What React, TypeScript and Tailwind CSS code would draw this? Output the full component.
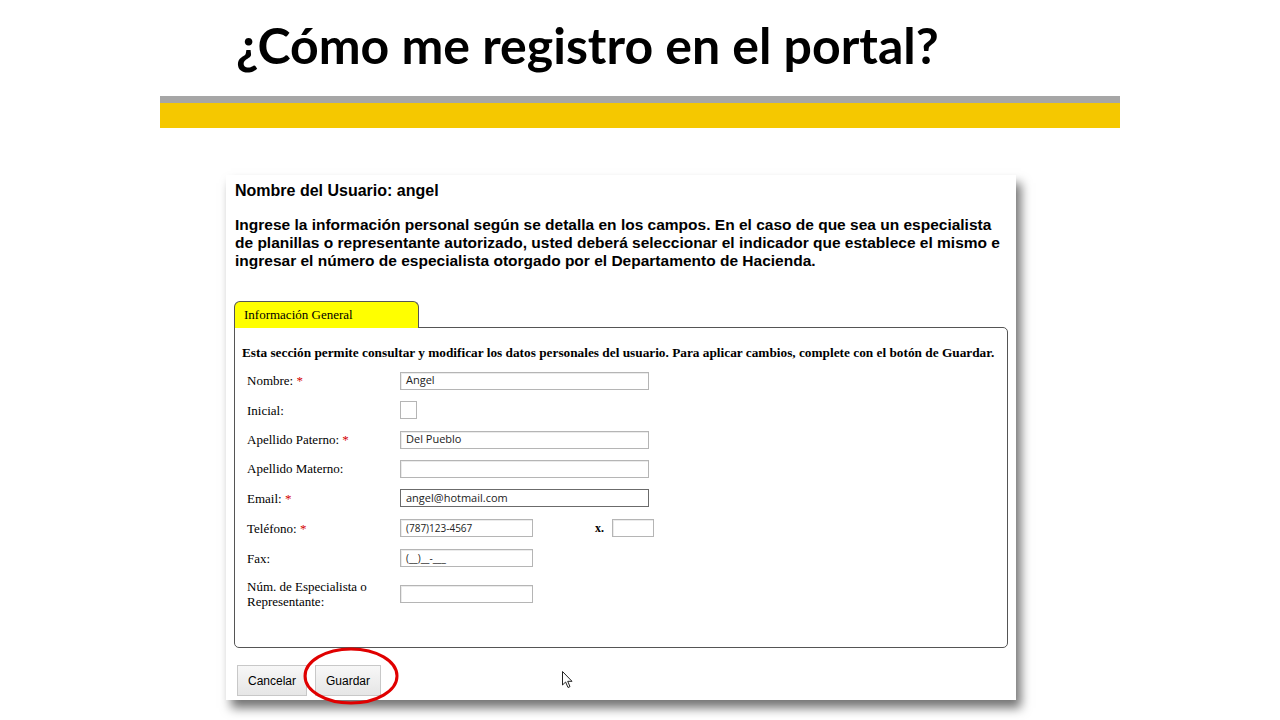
import React from "react"

const serif = { fontFamily: '"Liberation Serif", "Times New Roman", serif' }
const sans = { fontFamily: '"Liberation Sans", Arial, sans-serif' }

type Row = {
  label: React.ReactNode
  required?: boolean
  field: React.ReactNode
  h: string
}

function TextInput({ value, w = "w-[249px]", dark, small }: { value?: string; w?: string; dark?: boolean; small?: boolean }) {
  return (
    <div
      className={`${w} h-[18px] bg-white flex items-center px-[5px] text-[#222] ${
        dark ? "border border-[#6b6b6b]" : "border border-[#b5b5b5] shadow-[inset_1px_1px_0_rgba(0,0,0,0.08)]"
      } ${small ? "text-[10px]" : "text-[11px]"}`}
      style={{ fontFamily: '"Open Sans", "Noto Sans", sans-serif' }}
    >
      {value}
    </div>
  )
}

export default function App() {
  const rows: Row[] = [
    { label: "Nombre:", required: true, field: <TextInput value="Angel" />, h: "h-[29px]" },
    {
      label: "Inicial:",
      field: <div className="w-[17px] h-[18px] border border-[#b5b5b5] bg-white" />,
      h: "h-[30px]",
    },
    { label: "Apellido Paterno:", required: true, field: <TextInput value="Del Pueblo" />, h: "h-[29px]" },
    { label: "Apellido Materno:", field: <TextInput />, h: "h-[29px]" },
    { label: "Email:", required: true, field: <TextInput value="angel@hotmail.com" dark />, h: "h-[30px]" },
    {
      label: "Teléfono:",
      required: true,
      field: (
        <div className="flex items-center">
          <TextInput value="(787)123-4567" w="w-[133px]" small />
          <span className="ml-[62px] mr-[8px] font-bold text-[12px]" style={serif}>x.</span>
          <TextInput w="w-[42px]" />
        </div>
      ),
      h: "h-[30px]",
    },
    { label: "Fax:", field: <TextInput value="(__)__-___" w="w-[133px]" small />, h: "h-[30px]" },
    {
      label: (
        <>
          Núm. de Especialista o
          <br />
          Representante:
        </>
      ),
      field: <TextInput w="w-[133px]" />,
      h: "h-[42px]",
    },
  ]

  return (
    <div className="w-[1280px] h-[720px] bg-white overflow-hidden relative">
      {/* slide title */}
      <div className="pl-[236px] pt-[15px] h-[96px]">
        <h1
          className="text-[50px] font-bold leading-[60px] text-black"
          style={{ fontFamily: 'Lato, "Open Sans", sans-serif' }}
        >
          ¿Cómo me registro en el portal?
        </h1>
      </div>
      <div className="mx-[160px]">
        <div className="h-[7px] bg-[#a6a6a6]" />
        <div className="h-[25px] bg-[#f5c800]" />
      </div>

      {/* screenshot of the portal */}
      <div className="ml-[226px] mt-[47px] w-[790px] h-[525px] bg-white shadow-[5px_8px_10px_rgba(0,0,0,0.55)] relative px-[9px] pt-[6px] text-black" style={sans}>
        <p className="text-[16px] font-bold leading-[20px]">Nombre del Usuario: angel</p>
        <p className="mt-[15px] text-[15.5px] font-bold leading-[18px] w-[775px]">
          Ingrese la información personal según se detalla en los campos. En el caso de que sea un especialista de
          planillas o representante autorizado, usted deberá seleccionar el indicador que establece el mismo e ingresar
          el número de especialista otorgado por el Departamento de Hacienda.
        </p>

        {/* tab */}
        <div className="mt-[31px] ml-[-1px]">
          <div
            className="w-[185px] h-[27px] bg-[#ffff00] border border-[#555] border-b-0 rounded-t-[6px] pl-[9px] pt-[3px] text-[13px] -mb-px relative"
            style={serif}
          >
            Información General
          </div>
          <div className="w-[774px] h-[321px] border border-[#555] rounded-b-[5px] rounded-tr-[5px] pl-[7px] pt-[17px]" style={serif}>
            <p className="text-[13.3px] font-bold leading-[16px]">
              Esta sección permite consultar y modificar los datos personales del usuario. Para aplicar cambios, complete con el botón de Guardar.
            </p>
            <div className="mt-[5px] pl-[5px]">
              {rows.map((r, i) => (
                <div key={i} className={`${r.h} flex items-center`}>
                  <div className="w-[153px] text-[13px] leading-[15px]">
                    {r.label}
                    {r.required && <span className="text-[#d40000]"> *</span>}
                  </div>
                  {r.field}
                </div>
              ))}
            </div>
          </div>
        </div>

        {/* buttons */}
        <div className="mt-[17px] ml-[2px] flex gap-[8px] relative">
          <button className="w-[70px] h-[31px] border border-[#c8c8c8] bg-gradient-to-b from-[#f7f7f7] to-[#e6e6e6] text-[12px]" style={sans}>
            Cancelar
          </button>
          <button className="w-[66px] h-[31px] border border-[#c8c8c8] bg-gradient-to-b from-[#f7f7f7] to-[#e6e6e6] text-[12px]" style={sans}>
            Guardar
          </button>
          <svg className="absolute left-[66px] top-[-19px]" width="96" height="60" viewBox="0 0 96 60">
            <ellipse cx="48" cy="30" rx="46" ry="27" fill="none" stroke="#e00000" strokeWidth="3" />
          </svg>
          <svg className="absolute left-[325px] top-[6px]" width="12" height="18" viewBox="0 0 12 18">
            <path d="M0.5 0.5 L0.5 14 L3.6 11 L6 16.5 L8 15.6 L5.7 10.3 L10 10.3 Z" fill="#fff" stroke="#222" strokeWidth="1" strokeLinejoin="round" />
          </svg>
        </div>
      </div>
    </div>
  )
}
